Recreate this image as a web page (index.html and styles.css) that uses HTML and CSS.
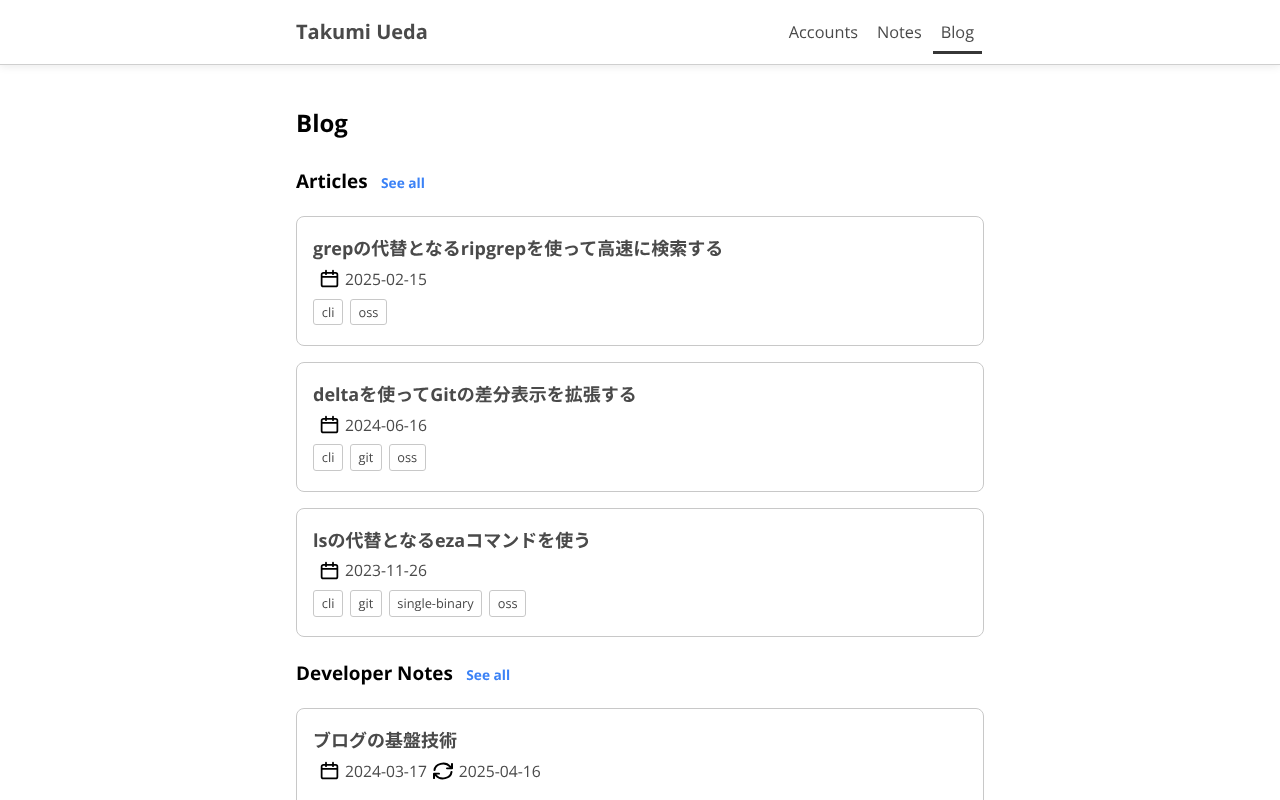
FILE: index.html
```html
<!DOCTYPE html>
<html lang="ja">
<head>
<meta charset="utf-8">
<title>Blog - Takumi Ueda</title>
<link rel="stylesheet" href="styles.css">
</head>
<body>
<svg class="sprite" width="0" height="0" aria-hidden="true">
  <symbol id="cal" viewBox="0 0 24 24"><path d="M5 5.500h14a2 2 0 0 1 2 2V19a2 2 0 0 1-2 2H5a2 2 0 0 1-2-2V7.500a2 2 0 0 1 2-2zM3 10h18M8 3v4M16 3v4" fill="none" stroke="currentColor" stroke-width="2" stroke-linecap="round" stroke-linejoin="round"/></symbol>
  <symbol id="upd" viewBox="2 2 20 20" preserveAspectRatio="none"><path d="M3.500 11a8.600 8 0 0 1 15.500-4l2 2M21 4v5h-5M20.500 13a8.600 8 0 0 1-15.500 4l-2-2M3 20v-5h5" fill="none" stroke="currentColor" stroke-width="2" stroke-linecap="round" stroke-linejoin="round"/></symbol>
</svg>
<header class="navbar">
  <div class="nav-inner">
    <a class="brand" href="#">Takumi Ueda</a>
    <nav class="nav-links">
      <a class="nav-link" href="#">Accounts</a>
      <a class="nav-link" href="#">Notes</a>
      <a class="nav-link active" href="#">Blog</a>
    </nav>
  </div>
</header>
<main class="page">
  <h1 class="page-title">Blog</h1>
  <div class="section-head"><h2 class="section-title">Articles</h2><a class="see-all" href="#">See all</a></div>
  <div class="cards">
    <article class="card">
      <h3 class="card-title">grepの代替となるripgrepを使って高速に検索する</h3>
      <div class="meta"><svg class="icon"><use href="#cal"/></svg><span>2025-02-15</span></div>
      <div class="tags"><span class="tag">cli</span><span class="tag">oss</span></div>
    </article>
    <article class="card">
      <h3 class="card-title">deltaを使ってGitの差分表示を拡張する</h3>
      <div class="meta"><svg class="icon"><use href="#cal"/></svg><span>2024-06-16</span></div>
      <div class="tags"><span class="tag">cli</span><span class="tag">git</span><span class="tag">oss</span></div>
    </article>
    <article class="card">
      <h3 class="card-title">lsの代替となるezaコマンドを使う</h3>
      <div class="meta"><svg class="icon"><use href="#cal"/></svg><span>2023-11-26</span></div>
      <div class="tags"><span class="tag">cli</span><span class="tag">git</span><span class="tag">single-binary</span><span class="tag">oss</span></div>
    </article>
  </div>
  <div class="section-head notes-head"><h2 class="section-title">Developer Notes</h2><a class="see-all" href="#">See all</a></div>
  <div class="cards">
    <article class="card">
      <h3 class="card-title">ブログの基盤技術</h3>
      <div class="meta"><svg class="icon"><use href="#cal"/></svg><span>2024-03-17</span><svg class="icon-upd"><use href="#upd"/></svg><span>2025-04-16</span></div>
    </article>
  </div>
</main>
</body>
</html>
```
FILE: styles.css
```css
* { box-sizing: border-box; }
html, body { margin: 0; height: 800px; overflow: hidden; }
body {
  background: #fff;
  color: #4a4a4a;
  font-family: "Open Sans", "Noto Sans CJK JP", sans-serif;
  font-size: 16px;
  line-height: 24px;
  text-rendering: geometricPrecision;
}
a { text-decoration: none; }
.sprite { display: block; height: 0; }
.navbar {
  height: 65px;
  background: #fff;
  border-bottom: 1px solid #cfcfcf;
  box-shadow: 0 2px 8px rgba(0, 0, 0, .08);
}
.nav-inner {
  width: 688px;
  height: 64px;
  margin: 0 auto;
  display: flex;
  align-items: center;
  justify-content: space-between;
  will-change: transform;
}
.brand { color: #4a4a4a; font-size: 20px; font-weight: 700; }
.nav-links { display: flex; height: 44px; margin-right: 2px; gap: 3px; }
.nav-link {
  color: #4a4a4a;
  font-size: 16.3px;
  padding: 10px 8px 0;
  height: 44px;
  border-bottom: 3px solid transparent;
}
.active { border-bottom-color: #363636; }
.page { width: 688px; margin: 0 auto; padding-top: 41px; will-change: transform; }
.page-title { margin: 0; color: #000; font-size: 24px; line-height: 36px; font-weight: 700; }
.section-head { display: flex; align-items: baseline; gap: 13.4px; margin-top: 24px; margin-bottom: 20px; }
.notes-head { margin-top: 21px; margin-bottom: 19.6px; }
.section-title { margin: 0; color: #000; font-size: 18.9px; line-height: 30px; font-weight: 700; }
.see-all { color: #3b82f6; font-size: 13.7px; font-weight: 700; }
.cards { display: flex; flex-direction: column; gap: 16px; }
.card {
  border: 1px solid #c8c8c8;
  border-radius: 8px;
  padding: 17px 16px 16px;
  height: 129.8px;
}
.card-title { margin: 0; color: #4a4a4a; font-size: 18px; line-height: 30px; font-weight: 700; }
.meta { display: flex; align-items: center; height: 24px; margin-top: 2.8px; padding-left: 5.5px; font-size: 15.7px; }
.icon { width: 21px; height: 21px; color: #000; margin-right: 5.5px; flex: none; }
.icon-upd { width: 20px; height: 18px; color: #000; margin: 0 6px; flex: none; }
.tags { display: flex; gap: 6.5px; margin-top: 7.8px; }
.tag {
  height: 26.4px;
  padding: 0 7.8px;
  border: 1px solid #c8c8c8;
  border-radius: 3px;
  font-size: 12.8px;
  line-height: 24px;
}
```
